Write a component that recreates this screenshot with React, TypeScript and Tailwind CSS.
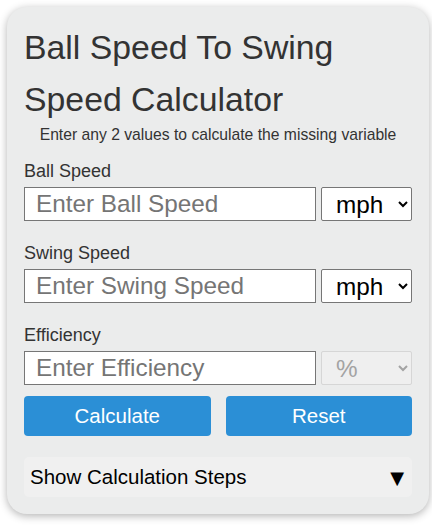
import React from 'react';

const font = { fontFamily: '"Liberation Sans", Arial, sans-serif' };

function Field({ label, placeholder, unit, disabled }: { label: string; placeholder: string; unit: string; disabled?: boolean }) {
  return (
    <div>
      <label className="block text-[18px] leading-[20px] text-[#333] mb-[6px]">{label}</label>
      <div className="flex gap-[5px]">
        <input
          type="text"
          placeholder={placeholder}
          className="w-[292px] h-[34px] border border-[#767676] bg-white px-[11px] text-[24.3px] text-black placeholder:text-[#757575] outline-none"
        />
        <select
          disabled={disabled}
          className={
            disabled
              ? 'w-[92px] h-[34px] border border-[#d6d6d6] bg-[#efefef] pl-[10px] text-[24.3px] text-[#a3a3a3] rounded-[2px]'
              : 'w-[92px] h-[34px] border border-[#767676] bg-white pl-[10px] text-[24.3px] text-black rounded-[2px]'
          }
        >
          <option>{unit}</option>
        </select>
      </div>
    </div>
  );
}

export default function App() {
  return (
    <div className="w-[432px] h-[526px] bg-white pt-[7px] pl-[7px]" style={font}>
      <div className="w-[422px] rounded-[20px] bg-[#ebecec] shadow-[0_2px_8px_rgba(0,0,0,0.3)] px-[17px] pt-[14px] pb-[17px]">
        {/* Header */}
        <h1 className="text-[33.8px] leading-[52px] text-[#333]">
          Ball Speed To Swing Speed Calculator
        </h1>
        <p className="text-center text-[15.7px] leading-[20px] text-[#333]">
          Enter any 2 values to calculate the missing variable
        </p>

        {/* Inputs */}
        <div className="mt-[16px] flex flex-col gap-[22px]">
          <Field label="Ball Speed" placeholder="Enter Ball Speed" unit="mph" />
          <Field label="Swing Speed" placeholder="Enter Swing Speed" unit="mph" />
          <Field label="Efficiency" placeholder="Enter Efficiency" unit="%" disabled />
        </div>

        {/* Buttons */}
        <div className="mt-[11px] flex gap-[15px]">
          <button className="flex-1 h-[40px] rounded-[4px] bg-[#2b8fd6] text-white text-[20.5px]">Calculate</button>
          <button className="flex-1 h-[40px] rounded-[4px] bg-[#2b8fd6] text-white text-[20.5px]">Reset</button>
        </div>

        {/* Steps */}
        <div className="mt-[21px] h-[40px] rounded-[5px] bg-[#f0f0f0] flex items-center justify-between pl-[6px] pr-[8px]">
          <span className="text-[20.5px] text-black">Show Calculation Steps</span>
          <span className="text-[18px] text-black" style={{ fontFamily: '"DejaVu Sans", sans-serif' }}>▼</span>
        </div>
      </div>
    </div>
  );
}
